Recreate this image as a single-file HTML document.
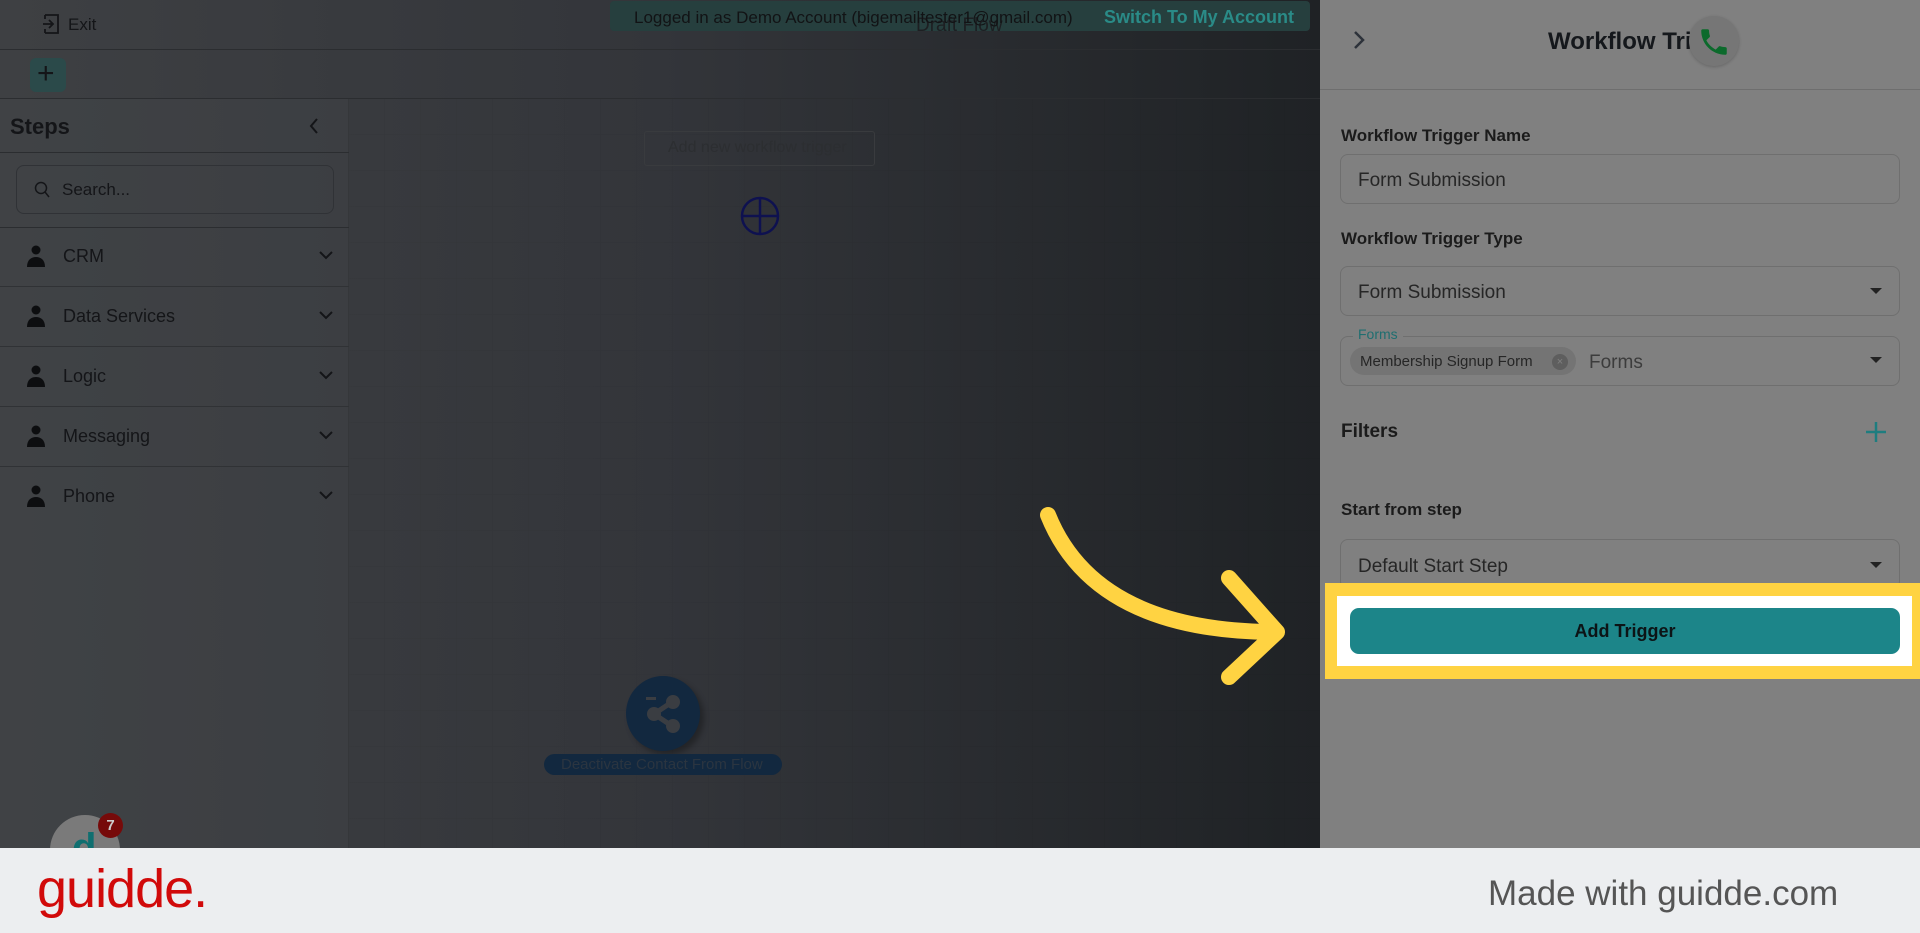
<!DOCTYPE html>
<html><head><meta charset="utf-8">
<style>
*{margin:0;padding:0;box-sizing:border-box}
body{width:1920px;height:933px;overflow:hidden;position:relative;font-family:"Liberation Sans",sans-serif;background:#2c2e31}
.main{position:absolute;left:0;top:0;width:1320px;height:848px;background:linear-gradient(90deg,#3e4043 0%,#33353a 50%,#1f2225 100%)}
.abs{position:absolute}
.line{position:absolute;background:#2b2d30;height:1px}
.side{position:absolute;left:0;top:99px;width:349px;height:749px;background:rgba(70,72,76,0.3);border-right:1px solid #35373a}
.item{position:absolute;left:0;width:349px;height:60px;border-bottom:1px solid #303235}
.item span{position:absolute;left:63px;top:19px;font-size:18px;color:#141518}
.person{position:absolute;left:26px;top:18px;width:20px;height:22px}
.chev{position:absolute;left:318px;top:22px}
.panel{position:absolute;left:1320px;top:0;width:600px;height:848px;background:#808080}
.lbl{position:absolute;left:1341px;font-size:17px;font-weight:bold;color:#1b1b1b}
.inp{position:absolute;left:1340px;width:560px;height:50px;border:1px solid #6f6f6f;border-radius:8px}
.inp .t{position:absolute;left:17px;top:13px;font-size:19px;color:#262626}
.caret{position:absolute;right:17px;top:21px;width:0;height:0;border-left:6px solid transparent;border-right:6px solid transparent;border-top:6px solid #222}
.foot{position:absolute;left:0;top:848px;width:1920px;height:85px;background:#eceef0}
</style></head><body>
<div class="main"></div>
<svg class="abs" style="left:349px;top:99px" width="971" height="749">
<defs><pattern id="g" width="36" height="36" patternUnits="userSpaceOnUse"><path d="M36 0V36H0" fill="none" stroke="#000" stroke-opacity="0.06"/></pattern></defs>
<rect width="971" height="749" fill="url(#g)"/></svg>
<div class="line" style="left:0;top:49px;width:1320px"></div>
<div class="line" style="left:0;top:98px;width:1320px"></div>
<svg class="abs" style="left:42px;top:13px" width="20" height="22" viewBox="0 0 20 22"><path d="M3 2h13v18H3M3 2v4M3 16v4M1 11h10M7 7l4 4-4 4" fill="none" stroke="#141518" stroke-width="1.8"/></svg>
<div class="abs" style="left:68px;top:15px;font-size:17px;color:#141518">Exit</div>
<div class="abs" style="left:30px;top:58px;width:36px;height:34px;border-radius:6px;background:#2b4a4a"></div>
<div class="abs" style="left:37px;top:57px;font-size:30px;color:#141518;line-height:34px">+</div>
<div class="abs" style="left:610px;top:1px;width:700px;height:30px;background:#263f3e;border-radius:4px"></div>
<div class="abs" style="left:916px;top:15px;font-size:19px;color:#1d1f22">Draft Flow</div>
<div class="abs" style="left:634px;top:8px;font-size:17px;color:#121315">Logged in as Demo Account (bigemailtester1@gmail.com)</div>
<div class="abs" style="left:1104px;top:7px;font-size:18px;font-weight:bold;color:#2a8b87">Switch To My Account</div>
<div class="side"></div>
<div class="abs" style="left:10px;top:114px;font-size:22px;font-weight:bold;color:#141518">Steps</div>
<svg class="abs" style="left:308px;top:117px" width="12" height="18"><path d="M9 2L3 9l6 7" fill="none" stroke="#141518" stroke-width="2"/></svg>
<div class="line" style="left:0;top:152px;width:349px"></div>
<div class="abs" style="left:16px;top:165px;width:318px;height:49px;border:1px solid #303236;border-radius:8px"></div>
<svg class="abs" style="left:34px;top:181px" width="16" height="18"><circle cx="7" cy="7" r="5.5" fill="none" stroke="#141518" stroke-width="1.5"/><path d="M11 11l4 5" stroke="#141518" stroke-width="1.5"/></svg>
<div class="abs" style="left:62px;top:180px;font-size:17px;color:#141518">Search...</div>
<div class="line" style="left:0;top:227px;width:349px"></div>
<div class="item" style="top:227px"><svg class="person" viewBox="0 0 20 22"><circle cx="10" cy="5" r="4.5" fill="#0d0e10"/><path d="M1 22c0-7 4-10 9-10s9 3 9 10z" fill="#0d0e10"/></svg><span>CRM</span><svg class="chev" width="16" height="12"><path d="M2 3l6 6 6-6" fill="none" stroke="#141518" stroke-width="2"/></svg></div>
<div class="item" style="top:287px"><svg class="person" viewBox="0 0 20 22"><circle cx="10" cy="5" r="4.5" fill="#0d0e10"/><path d="M1 22c0-7 4-10 9-10s9 3 9 10z" fill="#0d0e10"/></svg><span>Data Services</span><svg class="chev" width="16" height="12"><path d="M2 3l6 6 6-6" fill="none" stroke="#141518" stroke-width="2"/></svg></div>
<div class="item" style="top:347px"><svg class="person" viewBox="0 0 20 22"><circle cx="10" cy="5" r="4.5" fill="#0d0e10"/><path d="M1 22c0-7 4-10 9-10s9 3 9 10z" fill="#0d0e10"/></svg><span>Logic</span><svg class="chev" width="16" height="12"><path d="M2 3l6 6 6-6" fill="none" stroke="#141518" stroke-width="2"/></svg></div>
<div class="item" style="top:407px"><svg class="person" viewBox="0 0 20 22"><circle cx="10" cy="5" r="4.5" fill="#0d0e10"/><path d="M1 22c0-7 4-10 9-10s9 3 9 10z" fill="#0d0e10"/></svg><span>Messaging</span><svg class="chev" width="16" height="12"><path d="M2 3l6 6 6-6" fill="none" stroke="#141518" stroke-width="2"/></svg></div>
<div class="item" style="top:467px;border-bottom:none"><svg class="person" viewBox="0 0 20 22"><circle cx="10" cy="5" r="4.5" fill="#0d0e10"/><path d="M1 22c0-7 4-10 9-10s9 3 9 10z" fill="#0d0e10"/></svg><span>Phone</span><svg class="chev" width="16" height="12"><path d="M2 3l6 6 6-6" fill="none" stroke="#141518" stroke-width="2"/></svg></div>
<div class="abs" style="left:644px;top:131px;width:231px;height:35px;border:1px solid #393b3e;border-radius:3px"></div>
<div class="abs" style="left:668px;top:139px;font-size:16px;color:#2c2e31">Add new workflow trigger</div>
<svg class="abs" style="left:740px;top:196px" width="40" height="40"><circle cx="20" cy="20" r="18" fill="none" stroke="#0e1150" stroke-width="2.5"/><path d="M20 2v36M2 20h36" stroke="#0e1150" stroke-width="2.5"/></svg>
<div class="abs" style="left:626px;top:676px;width:74px;height:75px;border-radius:50%;background:#12283f;box-shadow:4px 4px 6px rgba(0,0,0,.3)"></div>
<svg class="abs" style="left:640px;top:690px" width="48" height="48"><path d="M32 12L14 24l18 12" stroke="#3a3d42" stroke-width="5" fill="none"/><circle cx="33" cy="12" r="7" fill="#3a3d42"/><circle cx="14" cy="24" r="7" fill="#3a3d42"/><circle cx="33" cy="36" r="7" fill="#3a3d42"/><rect x="6" y="7" width="10" height="3" fill="#3a3d42"/></svg>
<div class="abs" style="left:544px;top:754px;width:238px;height:21px;border-radius:11px;background:#12283f"></div>
<div class="abs" style="left:561px;top:756px;font-size:15px;color:#2b3540">Deactivate Contact From Flow</div>
<div class="abs" style="left:50px;top:815px;width:70px;height:70px;border-radius:50%;background:#7a7a7a"></div>
<div class="abs" style="left:72px;top:826px;font-size:40px;font-weight:bold;color:#0f6f70">d</div>
<div class="abs" style="left:98px;top:813px;width:25px;height:25px;border-radius:50%;background:#760a0a;color:#ccc;font-size:15px;font-weight:bold;text-align:center;line-height:25px">7</div>
<div class="panel"></div>
<div class="abs" style="left:1320px;top:89px;width:600px;height:1px;background:#6e6e6e"></div>
<svg class="abs" style="left:1351px;top:29px" width="16" height="22"><path d="M4 3l8 8-8 8" fill="none" stroke="#2d323a" stroke-width="2.5"/></svg>
<div class="abs" style="left:1548px;top:28px;width:145px;overflow:hidden;white-space:nowrap;font-size:24px;font-weight:bold;color:#15181c">Workflow Trigger</div>
<div class="abs" style="left:1689px;top:16px;width:50px;height:50px;border-radius:50%;background:#767676;box-shadow:0 1px 3px rgba(0,0,0,.2)"></div>
<svg class="abs" style="left:1697px;top:25px" width="34" height="34" viewBox="0 0 24 24"><path d="M6.6 10.8c1.4 2.8 3.8 5.1 6.6 6.6l2.2-2.2c.3-.3.7-.4 1-.2 1.1.4 2.3.6 3.6.6.6 0 1 .4 1 1V20c0 .6-.4 1-1 1C10.6 21 3 13.4 3 4c0-.6.4-1 1-1h3.5c.6 0 1 .4 1 1 0 1.3.2 2.5.6 3.6.1.3 0 .7-.2 1z" fill="#0c6a2c"/></svg>
<div class="lbl" style="top:126px">Workflow Trigger Name</div>
<div class="inp" style="top:154px"><div class="t" style="top:15px">Form Submission</div></div>
<div class="lbl" style="top:229px">Workflow Trigger Type</div>
<div class="inp" style="top:266px"><div class="t" style="top:15px">Form Submission</div><div class="caret"></div></div>
<div class="inp" style="top:336px"><div class="caret" style="top:20px"></div></div>
<div class="abs" style="left:1353px;top:326px;padding:0 5px;background:#808080;font-size:14px;color:#1f6e70">Forms</div>
<div class="abs" style="left:1350px;top:347px;width:226px;height:28px;border-radius:14px;background:#747474"></div>
<div class="abs" style="left:1360px;top:353px;font-size:15px;color:#262626">Membership Signup Form</div>
<div class="abs" style="left:1552px;top:354px;width:16px;height:16px;border-radius:50%;background:#5e5e5e;color:#808080;font-size:11px;text-align:center;line-height:16px">×</div>
<div class="abs" style="left:1589px;top:352px;font-size:19px;color:#3c3c3c">Forms</div>
<div class="abs" style="left:1341px;top:421px;font-size:19px;font-weight:bold;color:#1b1b1b">Filters</div>
<svg class="abs" style="left:1865px;top:421px" width="22" height="22"><path d="M11 1v20M1 11h20" stroke="#1e7d7f" stroke-width="2.5"/></svg>
<div class="lbl" style="top:500px">Start from step</div>
<div class="inp" style="top:539px"><div class="t" style="top:16px">Default Start Step</div><div class="caret" style="top:22px"></div></div>
<div class="abs" style="left:1325px;top:583px;width:595px;height:96px;background:#ffd342"></div>
<div class="abs" style="left:1337px;top:596px;width:575px;height:70px;background:#fff"></div>
<div class="abs" style="left:1350px;top:608px;width:550px;height:46px;border-radius:9px;background:#1c8589"></div>
<div class="abs" style="left:1350px;top:621px;width:550px;text-align:center;font-size:18px;font-weight:bold;color:#0c1416">Add Trigger</div>
<svg class="abs" style="left:0;top:0" width="1320" height="848"><path d="M1048 515Q1095 632 1277 632M1229 578L1277 632L1229 677" fill="none" stroke="#ffd342" stroke-width="16" stroke-linecap="round" stroke-linejoin="round"/></svg>
<div class="foot"></div>
<div class="abs" style="left:37px;top:858px;font-size:54px;color:#d10a0a;letter-spacing:-1px">guidde.</div>
<div class="abs" style="left:1488px;top:874px;font-size:35px;color:#555">Made with guidde.com</div>
</body></html>
